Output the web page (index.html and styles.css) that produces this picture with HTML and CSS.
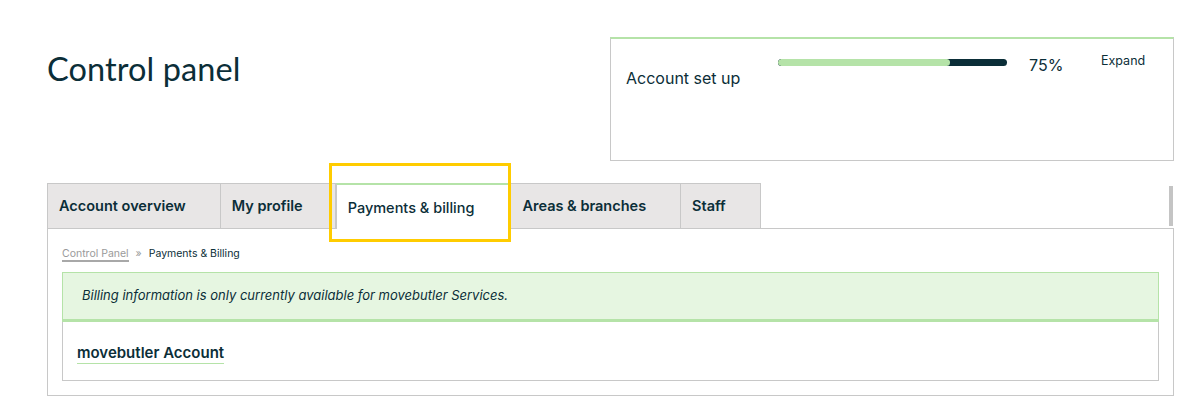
FILE: index.html
```html
<!DOCTYPE html>
<html lang="en">
<head>
    <meta charset="UTF-8">
    <meta name="viewport" content="width=device-width, initial-scale=1.0">
    <title>Control panel</title>
    <link rel="stylesheet" href="styles.css">
</head>
<body>

<div class="page">
    <div class="top-row">
        <h1 class="page-title">Control panel</h1>

        <div class="setup-box">
            <div class="setup-label">Account set up</div>
            <div class="progress"><div class="progress-fill" style="width: 75%"></div></div>
            <div class="progress-value">75%</div>
            <a class="setup-expand" href="#">Expand</a>
        </div>
    </div>

    <div class="tabs">
        <a class="tab" href="#">Account overview</a>
        <a class="tab" href="#">My profile</a>
        <a class="tab active highlighted" href="#">Payments &amp; billing</a>
        <a class="tab" href="#">Areas &amp; branches</a>
        <a class="tab" href="#">Staff</a>
        <div class="tabs-scroll"></div>
    </div>

    <div class="panel">
        <div class="breadcrumb">
            <a href="#">Control Panel</a>
            <span class="sep">&raquo;</span>
            <span>Payments &amp; Billing</span>
        </div>

        <div class="notice">Billing information is only currently available for movebutler Services.</div>

        <div class="account-box">
            <h2 class="account-title">movebutler Account</h2>
        </div>
    </div>
</div>

</body>
</html>
```

FILE: styles.css
```css
body {
    font-family: Inter, "Open Sans", sans-serif;
    margin: 0;
    padding: 0;
    background-color: #fff;
    color: #0b2e38;
}

.page {
    padding: 0 25px 0 47px;
}

.top-row {
    display: flex;
    justify-content: space-between;
    align-items: flex-start;
    padding-top: 37px;
}

.page-title {
    margin: 12px 0 0;
    font-family: Lato, sans-serif;
    font-size: 32.5px;
    font-weight: 400;
    line-height: 40px;
    letter-spacing: 0.1px;
}

/* account set up card */
.setup-box {
    display: flex;
    align-items: flex-start;
    width: 547px;
    height: 121px;
    border: 1px solid #c8c8c8;
    border-top: 2px solid #b5e3a8;
    padding: 0 0 0 15px;
}

.setup-label {
    width: 152px;
    margin-top: 29px;
    font-size: 16px;
    line-height: 20px;
}

.progress {
    width: 229px;
    height: 7px;
    margin-top: 20px;
    border-radius: 4px;
    background-color: #0b2e38;
    overflow: hidden;
}

.progress-fill {
    height: 100%;
    border-radius: 4px;
    background-color: #b5e3a8;
}

.progress-value {
    width: 38px;
    margin: 16px 0 0 22px;
    font-size: 16px;
    line-height: 20px;
}

.setup-expand {
    margin: 14px 0 0 34px;
    font-size: 12.5px;
    line-height: 16px;
    color: #0b2e38;
    text-decoration: none;
}

/* tabs */
.tabs {
    display: flex;
    align-items: flex-end;
    margin-top: 22px;
}

.tab {
    display: block;
    height: 44px;
    line-height: 44px;
    padding: 0 34px 0 11px;
    background-color: #e8e6e6;
    border: 1px solid #c8c8c8;
    border-bottom: none;
    border-left: none;
    font-size: 14.5px;
    font-weight: 600;
    color: #0b2e38;
    text-decoration: none;
}

.tab:first-child {
    border-left: 1px solid #c8c8c8;
}

.tab:nth-child(2) {
    padding-right: 32px;
}

.tab.active {
    position: relative;
    padding-right: 36px;
    background-color: #fff;
    border-top: 2px solid #b5e3a8;
    border-left: 1px solid #c8c8c8;
    line-height: 46px;
    margin-bottom: -1px;
    font-weight: 500;
}

.tab.highlighted::after {
    content: "";
    position: absolute;
    left: -8px;
    right: -1px;
    top: -22px;
    bottom: -13px;
    border: 3px solid #ffcc00;
}

.tabs-scroll {
    margin-left: auto;
    width: 4px;
    height: 40px;
    margin-bottom: 2px;
    margin-right: 1px;
    background-color: #c4c4c4;
}

/* tab content */
.panel {
    border: 1px solid #c8c8c8;
    padding: 17px 14px 14px 14px;
}

.breadcrumb {
    font-size: 10.5px;
    line-height: 16px;
    margin-bottom: 10px;
}

.breadcrumb a {
    color: #9a9a9a;
    text-decoration: none;
    border-bottom: 2px solid #a8a8a8;
}

.breadcrumb .sep {
    color: #9a9a9a;
    margin: 0 4px;
}

.notice {
    background-color: #e6f6e1;
    border: 1px solid #b5e3a8;
    border-bottom: 3px solid #b5e3a8;
    padding: 14px 19px 15px;
    font-size: 13px;
    line-height: 17px;
    font-style: italic;
}

.account-box {
    border: 1px solid #c8c8c8;
    border-top: none;
    padding: 20px 14px 16px;
}

.account-title {
    display: inline-block;
    margin: 0;
    font-size: 15px;
    font-weight: 600;
    line-height: 20px;
    border-bottom: 1px solid #b5e3a8;
}
```
